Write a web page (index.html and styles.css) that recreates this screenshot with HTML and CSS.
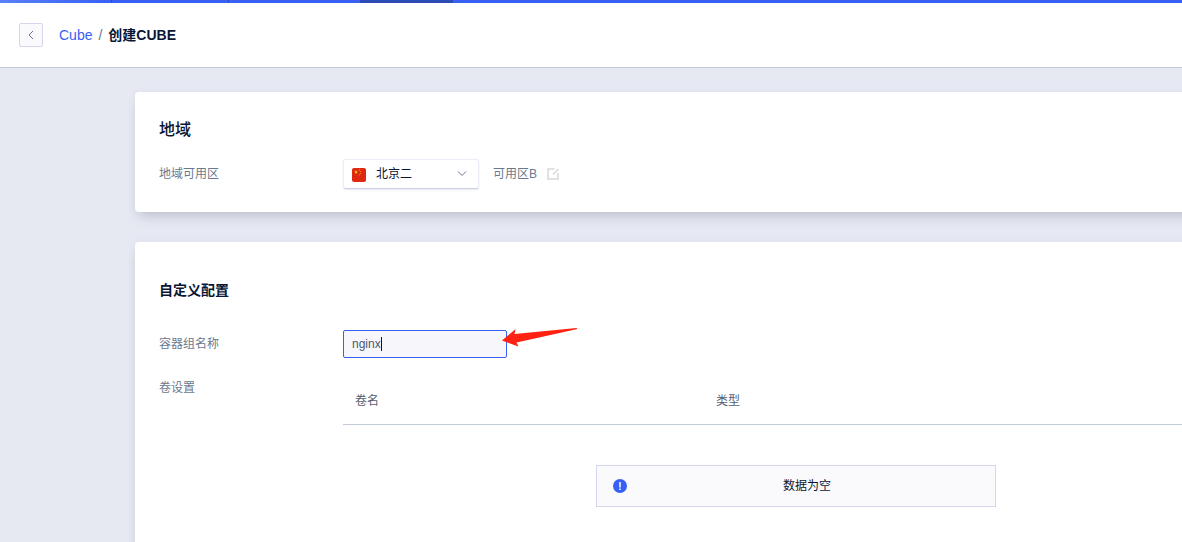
FILE: index.html
```html
<!DOCTYPE html>
<html lang="zh-CN">
  <head>
    <meta charset="utf-8">
    <title>创建CUBE</title>
    <link rel="stylesheet" href="styles.css">
  </head>
  <body>
    <div class="topbar">
      <span class="topbar-logo"></span>
      <span class="topbar-item"></span>
      <span class="topbar-item"></span>
      <span class="topbar-active"></span>
    </div>

    <header class="header">
      <button type="button" class="back" aria-label="返回">
        <svg width="8" height="10" viewBox="0 0 8 10"><path d="M6 1L2 5l4 4" /></svg>
      </button>
      <nav class="breadcrumb">
        <a href="#">Cube</a>
        <span class="slash">/</span>
        <strong>创建CUBE</strong>
      </nav>
    </header>

    <main class="content">
      <section class="card region">
        <h2>地域</h2>
        <div class="row">
          <label class="label" for="region">地域可用区</label>
          <div class="select">
            <svg class="flag" width="14" height="14" viewBox="0 0 14 14">
              <rect width="14" height="14" rx="2" fill="#de2910" />
              <path d="M4 2l.5 1.4H6l-1.200.9.5 1.500L4 4.900l-1.300.9.500-1.500L2 3.400h1.500z" fill="#ffde00" />
              <path d="M7 1.500h1v1H7zM8.300 3h.8v1h-.8zM8.300 5h.8v1h-.8zM7 6.500h1v.8H7z" fill="#f6a800" />
            </svg>
            <select id="region">
              <option>北京二</option>
            </select>
            <svg class="arrow" width="10" height="6" viewBox="0 0 10 6"><path d="M1 .5l4 4 4-4" /></svg>
          </div>
          <span class="zone">可用区B</span>
          <button type="button" class="edit" aria-label="编辑">
            <svg width="12" height="12" viewBox="0 0 12 12"><path d="M7.500 1H1v10h10V5M6 6.500L11.500 1" /></svg>
          </button>
        </div>
      </section>

      <section class="card config">
        <h3>自定义配置</h3>
        <div class="row">
          <label class="label" for="name">容器组名称</label>
          <div class="field">
            <input type="text" id="name" value="nginx">
            <span class="caret"></span>
            <svg class="pointer" width="76" height="20" viewBox="0 0 76 20"><path d="M0 13.500L13.500 2l-1 5L74.500 1l1 1-61 13.500 2 4z" /></svg>
          </div>
        </div>
        <div class="row volumes">
          <span class="label">卷设置</span>
          <div class="volume-list">
            <table>
              <thead>
                <tr>
                  <th class="col-name">卷名</th>
                  <th>类型</th>
                </tr>
              </thead>
            </table>
            <div class="empty">
              <svg width="14" height="14" viewBox="0 0 14 14">
                <circle cx="7" cy="7" r="7" fill="#3860f4" />
                <path d="M7 3v5.500M7 9.500V11" stroke="#fff" stroke-width="1.500" />
              </svg>
              <span>数据为空</span>
            </div>
          </div>
        </div>
      </section>
    </main>
  </body>
</html>
```
FILE: styles.css
```css
* {
  box-sizing: border-box;
}

body {
  margin: 0;
  min-height: 100vh;
  display: flex;
  flex-direction: column;
  overflow: hidden;
  background: #e6e9f2;
  color: #0a1633;
  font-family: "Liberation Sans", "Noto Sans CJK SC", sans-serif;
  font-size: 12px;
  line-height: 20px;
}

h2,
h3 {
  margin: 0;
  font-weight: 500;
}

button,
input,
select {
  font: inherit;
  color: inherit;
}

svg {
  display: block;
  fill: none;
}

.topbar {
  display: flex;
  height: 3px;
  background: #3860f4;
}

.topbar-logo {
  width: 112px;
  background: linear-gradient(90deg, #5780fa, #3860f4);
  border-right: 1px solid #2c4cc3;
}

.topbar-item {
  width: 117px;
  border-right: 1px solid #2c4cc3;
}

.topbar-item + .topbar-item {
  width: 131px;
  border: 0;
}

.topbar-active {
  width: 93px;
  background: #2d4ab5;
}

.header {
  display: flex;
  align-items: center;
  height: 65px;
  padding: 0 19px;
  background: #fff;
  border-bottom: 1px solid #c3cad9;
}

.back {
  display: flex;
  align-items: center;
  justify-content: center;
  width: 24px;
  height: 24px;
  padding: 0;
  background: #fafafc;
  border: 1px solid #d3d6ec;
  border-radius: 2px;
}

.back svg {
  stroke: #66758a;
}

.breadcrumb {
  display: flex;
  gap: 6px;
  margin-left: 16px;
  font-size: 14px;
}

.breadcrumb a {
  color: #3860f4;
  text-decoration: none;
}

.slash {
  color: #66758a;
}

.content {
  flex: 1;
  display: flex;
  flex-direction: column;
  gap: 30px;
  padding: 24px 0 0 135px;
}

/* cards run on past the right edge of the window */
.card {
  margin-right: -91px;
  padding: 24px;
  background: #fff;
  border-radius: 4px;
  box-shadow: 0 8px 12px -4px rgba(40, 50, 70, 0.2), 0 0 8px rgba(60, 70, 140, 0.05);
}

.region {
  padding-bottom: 23px;
}

.region h2 {
  font-size: 16px;
  line-height: 27px;
}

.region .row {
  margin-top: 16px;
}

.config {
  flex: 1;
  padding-top: 38px;
  padding-bottom: 60px;
}

.config h3 {
  font-size: 14px;
  font-weight: bold;
}

.config .row {
  margin-top: 30px;
}

.row {
  display: flex;
  align-items: center;
}

.label {
  flex: none;
  width: 184px;
  color: #6b798e;
}

.select {
  position: relative;
  width: 136px;
}

.select select {
  display: block;
  width: 100%;
  height: 30px;
  padding: 0 32px 0 32px;
  appearance: none;
  background: #fff;
  border: 1px solid #ebedf6;
  border-bottom-color: #ccd0e4;
  border-radius: 3px;
  box-shadow: 0 1px 2px rgba(60, 70, 140, 0.12);
}

.flag,
.arrow {
  position: absolute;
  pointer-events: none;
}

.flag {
  top: 9px;
  left: 9px;
}

.arrow {
  top: 12px;
  right: 12px;
  stroke: #66758a;
}

.zone {
  margin-left: 14px;
  color: #6b798e;
}

.edit {
  margin-left: 10px;
  padding: 0;
  background: none;
  border: 0;
}

.edit svg {
  stroke: #d8d8d8;
  stroke-width: 1.5;
}

.field {
  position: relative;
}

.field input {
  display: block;
  width: 164px;
  height: 28px;
  padding: 0 8px;
  background: #f6f6fb;
  border: 1px solid #3860f4;
  border-radius: 2px;
  outline: none;
  color: #4b5870;
}

.caret {
  position: absolute;
  top: 7px;
  left: 38px;
  width: 1px;
  height: 14px;
  background: #0a1633;
}

.pointer {
  position: absolute;
  top: -3px;
  left: 159px;
  fill: #ff2213;
}

.config .volumes {
  align-items: flex-start;
  margin-top: 19px;
}

.volumes .label {
  line-height: 22px;
}

.volume-list {
  flex: 1;
}

table {
  width: 100%;
  border-collapse: collapse;
  table-layout: fixed;
}

th {
  height: 47px;
  padding: 1px 12px 0;
  border-bottom: 1px solid #c3cad9;
  color: #526075;
  font-weight: normal;
  text-align: left;
}

.col-name {
  width: 361px;
}

.empty {
  display: flex;
  align-items: center;
  width: 400px;
  height: 42px;
  margin: 40px auto 0;
  padding: 0 8px 0 16px;
  background: #fafafc;
  border: 1px solid #d3d6ec;
}

.empty span {
  flex: 1;
  text-align: center;
}
```
